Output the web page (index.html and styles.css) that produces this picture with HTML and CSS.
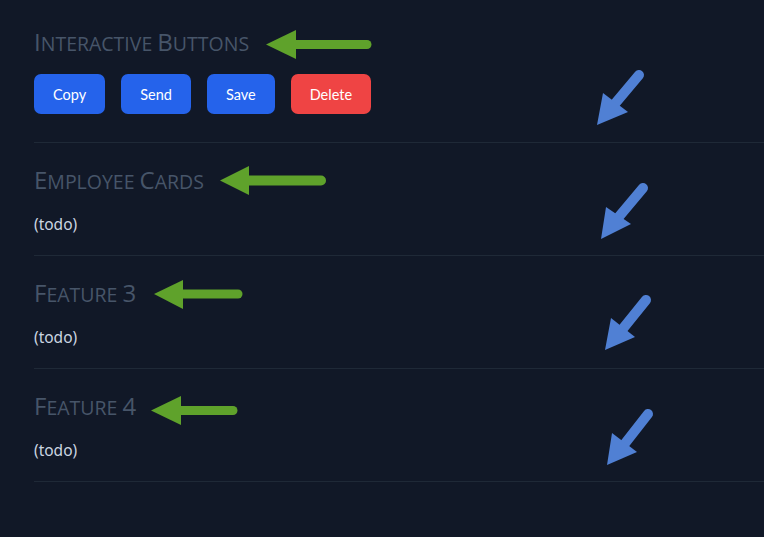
FILE: index.html
```html
<!DOCTYPE html>
<html lang="en">
<head>
<meta charset="utf-8">
<title>Features</title>
<link rel="stylesheet" href="styles.css">
</head>
<body>
<main class="page">
  <section class="feature">
    <h2 class="feature-title"><span class="cap">I</span>nteractive <span class="cap">B</span>uttons</h2>
    <div class="button-row">
      <button class="btn btn-blue">Copy</button>
      <button class="btn btn-blue">Send</button>
      <button class="btn btn-blue">Save</button>
      <button class="btn btn-red">Delete</button>
    </div>
  </section>
  <section class="feature">
    <h2 class="feature-title"><span class="cap">E</span>mployee <span class="cap">C</span>ards</h2>
    <p class="todo">(todo)</p>
  </section>
  <section class="feature">
    <h2 class="feature-title"><span class="cap">F</span>eature <span class="cap">3</span></h2>
    <p class="todo">(todo)</p>
  </section>
  <section class="feature">
    <h2 class="feature-title"><span class="cap">F</span>eature <span class="cap">4</span></h2>
    <p class="todo">(todo)</p>
  </section>
</main>
<svg class="annotations" width="764" height="537" viewBox="0 0 764 537" aria-hidden="true">
  <g class="green">
    <line x1="292" y1="44.5" x2="367" y2="44.5" stroke-width="9"/>
    <polygon points="266,44.5 296,30 296,59"/>
    <line x1="245" y1="180.5" x2="321" y2="180.5" stroke-width="10"/>
    <polygon points="220,180.5 249,166 249,195"/>
    <line x1="179" y1="294" x2="238" y2="294" stroke-width="9"/>
    <polygon points="154,294 183,280 183,309"/>
    <line x1="177" y1="410.5" x2="233" y2="410.5" stroke-width="9"/>
    <polygon points="151,410.5 181,396 181,425"/>
  </g>
  <g class="blue">
    <line x1="639" y1="75" x2="613" y2="106" stroke-width="10"/>
    <polygon points="597,125 603,93 628,112"/>
    <line x1="643" y1="188" x2="617" y2="219" stroke-width="10"/>
    <polygon points="601,239 606,207 631,224"/>
    <line x1="646" y1="300" x2="621" y2="331" stroke-width="10"/>
    <polygon points="605,350 611,318 635,337"/>
    <line x1="648" y1="414" x2="623" y2="446" stroke-width="10"/>
    <polygon points="607,465 612,433 637,452"/>
  </g>
</svg>
</body>
</html>
```
FILE: styles.css
```css
html, body {
  margin: 0;
  padding: 0;
  background: #111827;
}

body {
  font-family: "Noto Sans", "Open Sans", sans-serif;
  color: #cbd5e1;
  width: 764px;
  height: 537px;
  overflow: hidden;
  position: relative;
}

.page {
  padding: 0 0 0 34px;
  display: flex;
  flex-direction: column;
}

.feature {
  border-bottom: 1px solid #1f2937;
  padding: 21px 0 19px;
}

.feature:first-child {
  padding-top: 26px;
  padding-bottom: 28px;
}

.feature-title {
  margin: 0 0 14px;
  padding-top: 2px;
  font-family: "Open Sans", sans-serif;
  text-transform: uppercase;
  font-weight: 400;
  font-size: 19.5px;
  line-height: 32px;
  color: #475569;
  letter-spacing: 0;
}

.cap {
  font-size: 24px;
  line-height: 1;
}

.button-row {
  display: flex;
  gap: 16px;
}

.btn {
  height: 40px;
  padding: 0 19px;
  border: none;
  border-radius: 7px;
  color: #ffffff;
  font-family: Lato, "Noto Sans", sans-serif;
  font-size: 14.5px;
  cursor: pointer;
}

.btn-blue {
  background: #2563eb;
}

.btn-red {
  background: #ef4444;
}

.todo {
  margin: 0;
  font-size: 15.5px;
  line-height: 24px;
  color: #cbd5e1;
}

.annotations {
  position: absolute;
  left: 0;
  top: 0;
  pointer-events: none;
}

.annotations .green line {
  stroke: #5fa22b;
  stroke-linecap: round;
}

.annotations .green polygon {
  fill: #5fa22b;
}

.annotations .blue line {
  stroke: #5080d4;
  stroke-linecap: round;
}

.annotations .blue polygon {
  fill: #5080d4;
}
```
